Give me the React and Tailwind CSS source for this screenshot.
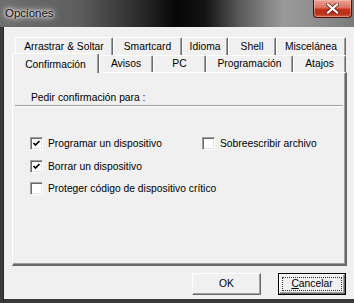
import React from "react";

const font = { fontFamily: '"Liberation Sans", Arial, sans-serif' };

function Check({ checked }) {
  return (
    <span className="inline-flex items-center justify-center w-[13px] h-[13px] bg-white border border-t-[#a0a0a0] border-l-[#a0a0a0] border-r-white border-b-white shadow-[inset_1px_1px_0_#696969,inset_-1px_-1px_0_#e3e3e3] shrink-0">
      {checked && (
        <svg width="9" height="9" viewBox="0 0 9 9">
          <path d="M1.5 4 L3.5 6 L7.5 2" fill="none" stroke="#000" strokeWidth="1.7" />
        </svg>
      )}
    </span>
  );
}

function Row({ checked, label }) {
  return (
    <div className="flex items-center gap-[5px] h-[13px]">
      <Check checked={checked} />
      <span className="text-[10.3px] leading-[13px] text-black whitespace-nowrap">{label}</span>
    </div>
  );
}

function Tab({ w, label, h }) {
  return (
    <div
      className={`flex items-center justify-center border-t border-l border-t-white border-l-white border-r border-r-[#696969] shadow-[inset_-1px_0_0_#a0a0a0] rounded-tl-[2px] rounded-tr-[2px] text-[10.3px] text-black whitespace-nowrap ${h}`}
      style={{ width: w }}
    >
      {label}
    </div>
  );
}

export default function App() {
  return (
    <div className="w-[354px] h-[303px] flex flex-col bg-[#3a3a3a] overflow-hidden" style={font}>
      {/* Title bar */}
      <div className="h-[27px] flex items-start justify-between bg-[linear-gradient(90deg,#6e6e6e_0%,#5e5e5e_22%,#303030_38%,#060606_50%,#141414_58%,#5c5c5c_68%,#9a9a9a_80%,#8c8c8c_90%,#7a7a7a_100%)] shrink-0">
        <div className="pl-[5px] pt-[5px] text-[11.5px] text-[#111] [text-shadow:0_0_5px_#fff,0_0_3px_#fff,0_0_8px_#eee]">
          Opciones
        </div>
        <div className="mr-[2px] w-[39px] h-[18px] rounded-b-[4px] border border-t-0 border-[#4a1208] bg-[linear-gradient(180deg,#e9a597_0%,#d9735f_45%,#c2321c_55%,#b8301a_80%,#d06040_100%)] shadow-[inset_0_0_0_1px_rgba(255,200,190,0.45)] flex items-center justify-center">
          <svg width="13" height="11" viewBox="0 0 13 11">
            <path d="M2 1.5 L11 9.5 M11 1.5 L2 9.5" stroke="#5a1a10" strokeWidth="3.6" strokeLinecap="square" />
            <path d="M2 1.5 L11 9.5 M11 1.5 L2 9.5" stroke="#fff" strokeWidth="2.2" strokeLinecap="square" />
          </svg>
        </div>
      </div>

      {/* Body */}
      <div className="flex-1 flex">
        <div className="w-[4px] bg-[#3a3a3a] border-r border-r-[#2a2a2a]" />
        <div className="flex-1 flex flex-col bg-[#f0f0f0] border-b-[4px] border-b-[#3a3a3a] pl-[8px] pr-[7px] pt-[10px]">
          {/* Tabs */}
          <div className="w-[335px] flex flex-col">
            <div className="flex pl-[3px]">
              <Tab w={98} label="Arrastrar & Soltar" h="h-[18px]" />
              <Tab w={69} label="Smartcard" h="h-[18px]" />
              <Tab w={46} label="Idioma" h="h-[18px]" />
              <Tab w={48} label="Shell" h="h-[18px]" />
              <Tab w={70} label="Miscelánea" h="h-[18px]" />
            </div>
            <div className="flex h-[17px] items-end">
              <div className="relative z-10 -mt-[2px] h-[20px] -mb-[1px] w-[87px] flex items-start pt-[3px] justify-center bg-[#f0f0f0] border-t border-l border-t-white border-l-white border-r border-r-[#696969] shadow-[inset_-1px_0_0_#a0a0a0] rounded-t-[2px] text-[10.3px] text-black">
                Confirmación
              </div>
              <Tab w={54} label="Avisos" h="h-[17px]" />
              <Tab w={53} label="PC" h="h-[17px]" />
              <Tab w={87} label="Programación" h="h-[17px]" />
              <Tab w={53} label="Atajos" h="h-[17px]" />
            </div>
            {/* Panel */}
            <div className="h-[194px] border-t border-l border-t-white border-l-white border-r-2 border-b-2 border-r-[#696969] border-b-[#696969] shadow-[inset_-1px_-1px_0_#a0a0a0] flex flex-col pt-[18px]">
              <div className="pl-[18px] h-[13px] text-[10.3px] leading-[13px] text-black">
                Pedir confirmación para :
              </div>
              <div className="mx-[2px] mt-[1px] border-t border-t-[#a0a0a0] border-b border-b-white" />
              <div className="pl-[17px] mt-[30px] flex flex-col">
                <div className="flex">
                  <div className="w-[172px]">
                    <Row checked label="Programar un dispositivo" />
                  </div>
                  <Row label="Sobreescribir archivo" />
                </div>
                <div className="mt-[10px]">
                  <Row checked label="Borrar un dispositivo" />
                </div>
                <div className="mt-[9px]">
                  <Row label="Proteger código de dispositivo crítico" />
                </div>
              </div>
            </div>
          </div>

          {/* Buttons */}
          <div className="w-[335px] flex justify-end gap-[17px] mt-[7px] pr-[1px]">
            <button className="w-[69px] h-[22px] bg-[#f0f0f0] border border-t-white border-l-white border-r-[#696969] border-b-[#696969] shadow-[inset_-1px_-1px_0_#a0a0a0] text-[10.3px] text-black flex items-center justify-center" style={font}>
              OK
            </button>
            <button className="w-[68px] h-[22px] bg-[#f0f0f0] border border-black flex p-0" style={font}>
              <span className="flex-1 border border-t-white border-l-white border-r-[#696969] border-b-[#696969] shadow-[inset_-1px_-1px_0_#a0a0a0] flex p-[2px]">
                <span className="flex-1 border border-dotted border-[#333] flex items-center justify-center text-[10.3px] text-black">
                  <span className="underline underline-offset-1">C</span>ancelar
                </span>
              </span>
            </button>
          </div>
        </div>
      </div>
    </div>
  );
}
